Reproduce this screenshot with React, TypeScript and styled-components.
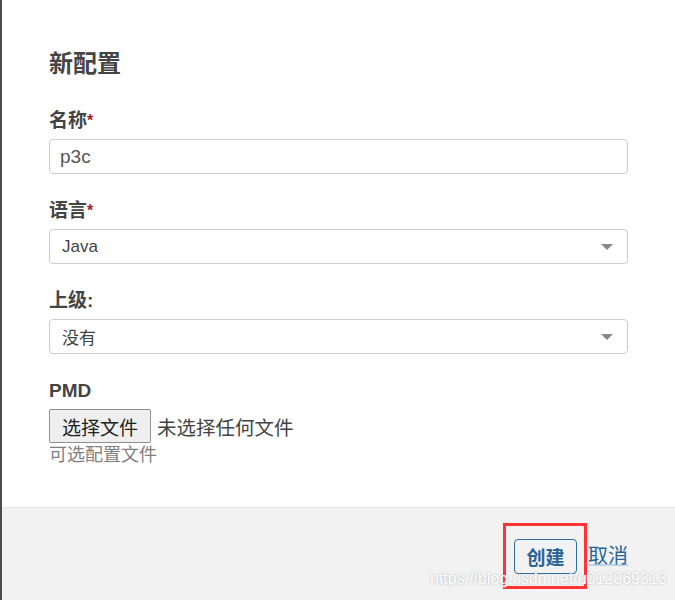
import React from 'react'
import styled, { createGlobalStyle } from 'styled-components'

const GlobalStyle = createGlobalStyle`
  html, body {
    margin: 0;
    padding: 0;
    background: #ffffff;
  }
  body {
    font-family: "Liberation Sans", "Noto Sans CJK SC", sans-serif;
  }
`

const Modal = styled.div`
  height: 600px;
  display: flex;
  flex-direction: column;
  border-left: 2px solid #4d4d4d;
  background: #ffffff;
  overflow: hidden;
  position: relative;
`

const ModalBody = styled.div`
  flex: 1;
  padding: 50px 47px 0 47px;
`

const Title = styled.h4`
  margin: 0 0 32px;
  font-size: 24px;
  line-height: 27px;
  font-weight: 700;
  color: #444444;
`

const FormGroup = styled.div`
  margin-bottom: 25px;
`

const Label = styled.label`
  display: block;
  margin-bottom: 6px;
  font-size: 19px;
  line-height: 24px;
  font-weight: 700;
  color: #444444;
`

const Required = styled.span`
  color: #a41e22;
  font-size: 16px;
  vertical-align: top;
`

const TextInput = styled.input`
  box-sizing: border-box;
  display: block;
  width: 100%;
  height: 35px;
  padding: 0 10px;
  border: 1px solid #cccccc;
  border-radius: 4px;
  font-family: inherit;
  font-size: 19px;
  color: #555555;
  outline: none;
`

const SelectBox = styled.div`
  box-sizing: border-box;
  height: 35px;
  display: flex;
  align-items: center;
  justify-content: space-between;
  padding: 0 14px 0 12px;
  border: 1px solid #cccccc;
  border-radius: 4px;
  font-size: 17px;
  color: #444444;
`

const Caret = styled.span`
  width: 0;
  height: 0;
  border-left: 6px solid transparent;
  border-right: 6px solid transparent;
  border-top: 6px solid #888888;
`

const FileRow = styled.div`
  display: flex;
  align-items: center;
  gap: 6px;
  font-size: 19.5px;
  color: #444444;
`

const FileButton = styled.button`
  box-sizing: border-box;
  height: 34px;
  width: 102px;
  padding: 0;
  border: 1px solid #8f8f8f;
  border-radius: 2px;
  background: #efefef;
  font-family: inherit;
  font-size: 19px;
  color: #222222;
`

const HelpText = styled.div`
  margin-top: 1px;
  font-size: 18px;
  line-height: 22px;
  color: #808080;
`

const Footer = styled.div`
  height: 93px;
  box-sizing: border-box;
  padding: 31px 47px 0;
  background: #f2f2f2;
  border-top: 1px solid #e6e6e6;
  display: flex;
  justify-content: flex-end;
  align-items: flex-start;
  gap: 11px;
  position: relative;
`

const CreateButton = styled.button`
  box-sizing: border-box;
  height: 35px;
  width: 63px;
  padding: 0;
  border: 1px solid #2e6da4;
  border-radius: 4px;
  background: transparent;
  font-family: inherit;
  font-size: 19px;
  font-weight: 700;
  color: #2a6496;
`

const CancelLink = styled.a`
  margin-top: 4px;
  font-size: 20px;
  line-height: 26px;
  color: #2a6496;
  text-decoration: underline;
  text-decoration-color: #bcd3e6;
`

const Highlight = styled.div`
  position: absolute;
  left: 501px;
  top: 15px;
  width: 84px;
  height: 66px;
  box-sizing: border-box;
  border: 3px solid #ff3333;
  pointer-events: none;
`

const Watermark = styled.div`
  position: absolute;
  left: 428px;
  top: 62px;
  font-size: 16px;
  color: #ffffff;
  text-shadow: 0 0 2px #a8a8a8;
  white-space: nowrap;
  pointer-events: none;
`

const App: React.FC = () => {
  return (
    <>
      <GlobalStyle />
      <Modal>
        <ModalBody>
          <Title>新配置</Title>

          <FormGroup>
            <Label>名称<Required>*</Required></Label>
            <TextInput defaultValue="p3c" />
          </FormGroup>

          <FormGroup>
            <Label>语言<Required>*</Required></Label>
            <SelectBox>
              <span>Java</span>
              <Caret />
            </SelectBox>
          </FormGroup>

          <FormGroup>
            <Label>上级:</Label>
            <SelectBox>
              <span>没有</span>
              <Caret />
            </SelectBox>
          </FormGroup>

          <div>
            <Label>PMD</Label>
            <FileRow>
              <FileButton>选择文件</FileButton>
              <span>未选择任何文件</span>
            </FileRow>
            <HelpText>可选配置文件</HelpText>
          </div>
        </ModalBody>

        <Footer>
          <CreateButton>创建</CreateButton>
          <CancelLink href="#">取消</CancelLink>
          <Highlight />
          <Watermark>https://blog.csdn.net/u012069313</Watermark>
        </Footer>
      </Modal>
    </>
  )
}

export default App
